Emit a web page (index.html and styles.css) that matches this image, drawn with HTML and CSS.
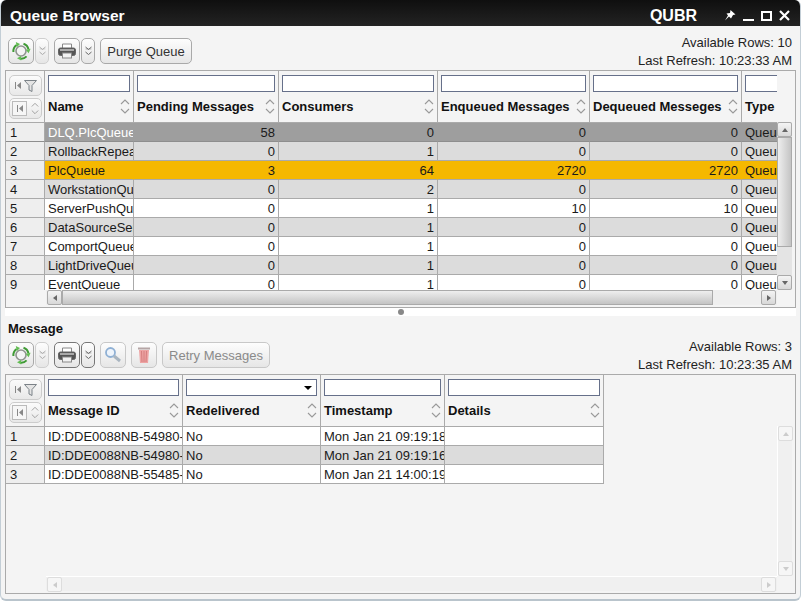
FILE: index.html
```html
<!DOCTYPE html>
<html lang="en">
<head>
    <meta charset="UTF-8">
    <title>Queue Browser</title>
    <link rel="stylesheet" href="styles.css">
</head>
<body>

    <!-- Shared icons -->
    <svg class="sprite" width="0" height="0">
        <symbol id="i-refresh" viewBox="0 0 20 20">
            <circle cx="10" cy="10" r="5" fill="#f4f4f4" stroke="#8f948f" stroke-width="1.600"/>
            <path d="M2.400 11a7.600 7.600 0 0 1 3.200-7" fill="none" stroke="#3f9a35" stroke-width="2"/>
            <path d="M4.800 1l4.200 2-3.200 3.200z" fill="#62bd52"/>
            <path d="M12.500 2.800a7.600 7.600 0 0 1 5 5.600" fill="none" stroke="#3f9a35" stroke-width="2"/>
            <path d="M19.600 7.800l-2 4.400-2.900-3.400z" fill="#62bd52"/>
            <path d="M15.600 15.400a7.600 7.600 0 0 1-6 2.200" fill="none" stroke="#3f9a35" stroke-width="2"/>
            <path d="M10.200 19.600l-4.200-2.400 4-2.300z" fill="#62bd52"/>
        </symbol>
        <symbol id="i-print" viewBox="0 0 18 16">
            <path d="M4.500 5V1h9v4" fill="#fff" stroke="#888"/>
            <rect x=".5" y="5" width="17" height="7.500" rx="2" fill="#555" stroke="#666"/>
            <rect x="2" y="6" width="14" height="2" fill="#aaa"/>
            <rect x="4.500" y="10" width="9" height="5" fill="#f2f2f2" stroke="#888"/>
        </symbol>
        <symbol id="i-more" viewBox="0 0 7 10">
            <path d="M.5 1l3 2.500 3-2.500M.5 6l3 2.500 3-2.500" fill="none" stroke="currentColor"/>
            <path d="M.5 3h6" fill="none" stroke="currentColor" stroke-opacity=".4"/>
        </symbol>
        <symbol id="i-sort" viewBox="0 0 10 15">
            <path d="M1 5l4-4 4 4M1 10l4 4 4-4" fill="none" stroke="#999" stroke-width="1.100"/>
        </symbol>
        <symbol id="i-first" viewBox="0 0 6 7">
            <path d="M.5 0v7" stroke="#888"/>
            <path d="M6 0v7L2 3.500z" fill="#888"/>
        </symbol>
        <symbol id="i-filter" viewBox="0 0 13 12">
            <path d="M.5 .5h12l-4.500 5v6l-3-1.500V5.500z" fill="#e4e4e4" stroke="#7b8288"/>
        </symbol>
    </svg>

    <div class="window">
        <header class="titlebar">
            <span class="titlebar-name">Queue Browser</span>
            <span class="titlebar-code">QUBR</span>
            <svg class="titlebar-ctrl pin" width="12" height="11" viewBox="0 0 12 11">
                <path d="M6.500 0l5 4.500-2.500.5-2 3.500-2-2-4 4 3-5-1.500-2 3.500-.5z" fill="#fff"/>
            </svg>
            <span class="titlebar-ctrl minimize"></span>
            <span class="titlebar-ctrl maximize"></span>
            <svg class="titlebar-ctrl close" width="11" height="11" viewBox="0 0 11 11">
                <path d="M1 1l9 9M10 1l-9 9" stroke="#fff" stroke-width="2.200"/>
            </svg>
        </header>

        <section class="toolbar toolbar-top">
            <button class="btn btn-icon"><svg width="20" height="20"><use href="#i-refresh"/></svg></button>
            <button class="btn btn-more btn-faded"><svg width="7" height="10"><use href="#i-more"/></svg></button>
            <button class="btn btn-icon btn-gap"><svg width="18" height="16"><use href="#i-print"/></svg></button>
            <button class="btn btn-more"><svg width="7" height="10"><use href="#i-more"/></svg></button>
            <button class="btn btn-text">Purge Queue</button>
            <div class="status">
                <div>Available Rows: 10</div>
                <div>Last Refresh: 10:23:33 AM</div>
            </div>
        </section>

        <section class="grid grid-queues">
            <div class="grid-view">
                <table class="table">
                    <colgroup>
                        <col class="w39"><col class="w89"><col class="w145"><col class="w159"><col class="w152"><col class="w152"><col class="w100">
                    </colgroup>
                    <thead>
                        <tr>
                            <th>
                                <div class="corner">
                                    <span class="corner-btn"><svg width="6" height="7"><use href="#i-first"/></svg><svg width="13" height="12"><use href="#i-filter"/></svg></span>
                                    <span class="corner-btn corner-btn-low"><span class="corner-box"><svg width="6" height="7"><use href="#i-first"/></svg></span><svg width="8" height="15"><use href="#i-sort"/></svg></span>
                                </div>
                            </th>
                            <th><div class="head"><input class="filter"><div class="head-label">Name<svg width="10" height="15"><use href="#i-sort"/></svg></div></div></th>
                            <th><div class="head"><input class="filter"><div class="head-label">Pending Messages<svg width="10" height="15"><use href="#i-sort"/></svg></div></div></th>
                            <th><div class="head"><input class="filter"><div class="head-label">Consumers<svg width="10" height="15"><use href="#i-sort"/></svg></div></div></th>
                            <th><div class="head"><input class="filter"><div class="head-label">Enqueued Messages<svg width="10" height="15"><use href="#i-sort"/></svg></div></div></th>
                            <th><div class="head"><input class="filter"><div class="head-label">Dequeued Messeges<svg width="10" height="15"><use href="#i-sort"/></svg></div></div></th>
                            <th><div class="head"><input class="filter"><div class="head-label">Type</div></div></th>
                        </tr>
                    </thead>
                    <tbody>
                        <tr class="row-dark"><td class="idx">1</td><td class="name">DLQ.PlcQueue</td><td class="num">58</td><td class="num">0</td><td class="num">0</td><td class="num">0</td><td>Queue</td></tr>
                        <tr class="row-alt"><td class="idx">2</td><td>RollbackRepeatQueue</td><td class="num">0</td><td class="num">1</td><td class="num">0</td><td class="num">0</td><td>Queue</td></tr>
                        <tr class="row-sel"><td class="idx">3</td><td>PlcQueue</td><td class="num">3</td><td class="num">64</td><td class="num">2720</td><td class="num">2720</td><td>Queue</td></tr>
                        <tr class="row-alt"><td class="idx">4</td><td>WorkstationQueue</td><td class="num">0</td><td class="num">2</td><td class="num">0</td><td class="num">0</td><td>Queue</td></tr>
                        <tr><td class="idx">5</td><td>ServerPushQueue</td><td class="num">0</td><td class="num">1</td><td class="num">10</td><td class="num">10</td><td>Queue</td></tr>
                        <tr class="row-alt"><td class="idx">6</td><td>DataSourceServiceQueue</td><td class="num">0</td><td class="num">1</td><td class="num">0</td><td class="num">0</td><td>Queue</td></tr>
                        <tr><td class="idx">7</td><td>ComportQueue</td><td class="num">0</td><td class="num">1</td><td class="num">0</td><td class="num">0</td><td>Queue</td></tr>
                        <tr class="row-alt"><td class="idx">8</td><td>LightDriveQueue</td><td class="num">0</td><td class="num">1</td><td class="num">0</td><td class="num">0</td><td>Queue</td></tr>
                        <tr><td class="idx">9</td><td>EventQueue</td><td class="num">0</td><td class="num">1</td><td class="num">0</td><td class="num">0</td><td>Queue</td></tr>
                    </tbody>
                </table>
            </div>
            <div class="vbar">
                <span class="sb-btn"><i class="arrow-up"></i></span>
                <span class="vbar-thumb"></span>
                <span class="sb-btn"><i class="arrow-down"></i></span>
            </div>
            <div class="hbar">
                <span class="sb-btn"><i class="arrow-left"></i></span>
                <span class="hbar-thumb"></span>
                <span class="sb-btn"><i class="arrow-right"></i></span>
            </div>
        </section>

        <div class="splitter"><span class="splitter-dot"></span></div>

        <h3 class="section-title">Message</h3>

        <section class="toolbar">
            <button class="btn btn-icon"><svg width="20" height="20"><use href="#i-refresh"/></svg></button>
            <button class="btn btn-more btn-faded"><svg width="7" height="10"><use href="#i-more"/></svg></button>
            <button class="btn btn-icon btn-gap btn-dark"><svg width="18" height="16"><use href="#i-print"/></svg></button>
            <button class="btn btn-more btn-dark"><svg width="7" height="10"><use href="#i-more"/></svg></button>
            <button class="btn btn-icon btn-off btn-gap">
                <svg width="18" height="18" viewBox="0 0 18 18">
                    <circle cx="6.500" cy="6.500" r="4.500" fill="#eef4fb" stroke="#8fb0d4" stroke-width="1.800"/>
                    <path d="M10 10l6 5" stroke="#a9b5c0" stroke-width="3"/>
                </svg>
            </button>
            <button class="btn btn-icon btn-off btn-gap">
                <svg width="14" height="18" viewBox="0 0 14 18">
                    <path d="M1 2.500h12" stroke="#b5a5a5" stroke-width="2"/>
                    <path d="M2 4h10l-1 13H3z" fill="#eda3a3"/>
                    <path d="M4.500 5l.5 11M7 5v11M9.500 5L9 16" stroke="#d67e7e"/>
                </svg>
            </button>
            <button class="btn btn-text btn-off btn-retry">Retry Messages</button>
            <div class="status">
                <div>Available Rows: 3</div>
                <div>Last Refresh: 10:23:35 AM</div>
            </div>
        </section>

        <section class="grid grid-messages">
            <div class="grid-view">
                <table class="table table-messages">
                    <colgroup>
                        <col class="w39"><col class="w138"><col class="w138"><col class="w124"><col class="w159">
                    </colgroup>
                    <thead>
                        <tr>
                            <th>
                                <div class="corner">
                                    <span class="corner-btn"><svg width="6" height="7"><use href="#i-first"/></svg><svg width="13" height="12"><use href="#i-filter"/></svg></span>
                                    <span class="corner-btn corner-btn-low"><span class="corner-box"><svg width="6" height="7"><use href="#i-first"/></svg></span><svg width="8" height="15"><use href="#i-sort"/></svg></span>
                                </div>
                            </th>
                            <th><div class="head"><input class="filter"><div class="head-label">Message ID<svg width="10" height="15"><use href="#i-sort"/></svg></div></div></th>
                            <th><div class="head"><div class="filter filter-select"><i class="arrow-select"></i></div><div class="head-label">Redelivered<svg width="10" height="15"><use href="#i-sort"/></svg></div></div></th>
                            <th><div class="head"><input class="filter"><div class="head-label">Timestamp<svg width="10" height="15"><use href="#i-sort"/></svg></div></div></th>
                            <th><div class="head"><input class="filter"><div class="head-label">Details<svg width="10" height="15"><use href="#i-sort"/></svg></div></div></th>
                        </tr>
                    </thead>
                    <tbody>
                        <tr><td class="idx">1</td><td>ID:DDE0088NB-54980-</td><td>No</td><td>Mon Jan 21 09:19:18</td><td></td></tr>
                        <tr class="row-alt"><td class="idx">2</td><td>ID:DDE0088NB-54980-</td><td>No</td><td>Mon Jan 21 09:19:16</td><td></td></tr>
                        <tr><td class="idx">3</td><td>ID:DDE0088NB-55485-</td><td>No</td><td>Mon Jan 21 14:00:19</td><td></td></tr>
                    </tbody>
                </table>
            </div>
            <div class="vbar vbar-off">
                <span class="sb-btn"><i class="arrow-up"></i></span>
                <span class="sb-btn"><i class="arrow-down"></i></span>
            </div>
            <div class="hbar hbar-off">
                <span class="sb-btn"><i class="arrow-left"></i></span>
                <span class="sb-btn"><i class="arrow-right"></i></span>
            </div>
        </section>
    </div>

</body>
</html>
```

FILE: styles.css
```css
* {
    box-sizing: border-box;
}

body {
    margin: 0;
    background: #fff;
    font-family: "Liberation Sans", Arial, sans-serif;
    font-size: 13px;
    color: #1a1a1a;
}

.sprite {
    position: absolute;
}

.window {
    width: 801px;
    height: 601px;
    overflow: hidden;
    background: #f4f4f4;
    border-radius: 6px;
    border-left: 1px solid #c3ced6;
    border-right: 1px solid #c3ced6;
    border-bottom: 2px solid #b9c4cc;
    display: flex;
    flex-direction: column;
}

/* Title bar */
.titlebar {
    height: 26px;
    margin: 0 -1px;
    flex: none;
    padding: 0 11px 0 10px;
    background: linear-gradient(#0f0f0f, #232323);
    color: #fff;
    font-weight: bold;
    font-size: 15.5px;
    display: flex;
    align-items: center;
}

.titlebar-name {
    flex: 1;
    padding-top: 5px;
}

.titlebar-code {
    margin-right: 27px;
    font-size: 16px;
    padding-top: 5px;
}

.titlebar-ctrl {
    display: block;
    flex: none;
}

.pin {
    margin-right: 7px;
    margin-top: 4px;
}

.minimize {
    width: 11px;
    height: 2px;
    margin: 14px 7px 0 0;
    background: #fff;
}

.maximize {
    width: 11px;
    height: 10px;
    margin: 5px 7px 0 0;
    border: 2px solid #fff;
}

.close {
    margin-top: 4px;
}

/* Toolbars */
.toolbar {
    height: 36px;
    flex: none;
    padding: 4px 8px 0 7px;
    display: flex;
    align-items: flex-start;
}

.toolbar-top {
    margin-top: 8px;
}

.btn {
    height: 26px;
    padding: 0;
    border: 1px solid #a9a9a9;
    border-radius: 5px;
    background: linear-gradient(#fdfdfd, #e6e6e6);
    font: inherit;
    color: #333;
    display: flex;
    align-items: center;
    justify-content: center;
}

.btn-icon {
    width: 26px;
}

.btn-more {
    width: 14px;
    margin-left: 1px;
    color: #666;
}

.btn-faded {
    border-color: #cfcfcf;
    color: #aaa;
}

.btn-gap {
    margin-left: 5px;
}

.btn-dark {
    border-color: #777;
}

.btn-text {
    width: 92px;
    margin-left: 5px;
}

.btn-off {
    border-color: #c8c8c8;
    color: #8a8a8a;
}

.btn-retry {
    width: 108px;
}

.status {
    margin-left: auto;
    margin-top: -4px;
    line-height: 18px;
    text-align: right;
    color: #222;
}

/* Grids */
.grid {
    flex: none;
    margin: 0 4px;
    border: 1px solid #aaa;
    display: grid;
    grid-template-columns: 771px 15px;
}

.grid-queues {
    height: 238px;
    grid-template-rows: 219px 15px;
}

.grid-messages {
    height: 220px;
    grid-template-rows: 201px 15px;
}

.grid-view {
    overflow: hidden;
}

.table {
    width: 836px;
    table-layout: fixed;
    border-collapse: separate;
    border-spacing: 0;
    font-size: 13px;
}

.table-messages {
    width: 598px;
}

.w39 { width: 39px; }
.w89 { width: 89px; }
.w100 { width: 100px; }
.w124 { width: 124px; }
.w138 { width: 138px; }
.w145 { width: 145px; }
.w152 { width: 152px; }
.w159 { width: 159px; }

.table th {
    height: 52px;
    padding: 0;
    border-right: 1px solid #aaa;
    border-bottom: 1px solid #aaa;
    background: #f4f4f4;
    text-align: left;
    vertical-align: top;
}

.head {
    padding: 4px 3px 0;
}

.filter {
    display: block;
    width: 100%;
    height: 17px;
    padding: 0 2px;
    border: 1px solid #66708a;
    background: #fff;
    border-radius: 0;
}

.filter-select {
    display: flex;
    align-items: center;
    justify-content: flex-end;
    padding-right: 4px;
}

.arrow-select {
    border: 4px solid transparent;
    border-top-color: #000;
    border-bottom-width: 0;
}

.head-label {
    height: 24px;
    margin-top: 2px;
    font-size: 13px;
    font-weight: bold;
    color: #111;
    white-space: nowrap;
    display: flex;
    align-items: center;
    justify-content: space-between;
}

.corner {
    padding: 4px 2px 0 3px;
    display: flex;
    flex-direction: column;
    gap: 2px;
}

.corner-btn {
    height: 21px;
    padding: 0 4px 0 5px;
    border: 1px solid #ccc;
    border-radius: 5px;
    background: linear-gradient(#fbfbfb, #e8e8e8);
    display: flex;
    align-items: center;
    justify-content: space-between;
}

.corner-btn-low {
    padding-left: 2px;
    padding-right: 2px;
}

.corner-box {
    width: 15px;
    height: 15px;
    border: 1px solid #bbb;
    background: #f6f6f6;
    display: flex;
    align-items: center;
    justify-content: center;
}

.table td {
    height: 19px;
    padding: 0 3px;
    border-right: 1px solid #aaa;
    border-bottom: 1px solid #aaa;
    background: #fff;
    overflow: hidden;
    white-space: nowrap;
    line-height: 15px;
}

.table .num {
    text-align: right;
}

.table .row-alt td {
    background: #dcdcdc;
}

.table .row-dark td {
    background: #9e9e9e;
    border-color: #9e9e9e #9e9e9e #8e8e8e;
}

.table .row-dark .name {
    color: #fff;
}

.table .row-sel td {
    background: #f5b800;
    border-right-color: #f5b800;
}

.table td.idx,
.table .row-dark td.idx,
.table .row-sel td.idx {
    padding-left: 4px;
    background: #eee;
    border-right-color: #aaa;
}

/* Scrollbars */
.vbar {
    margin-top: 51px;
    background: #e4e4e4;
    display: flex;
    flex-direction: column;
    justify-content: space-between;
}

.hbar {
    grid-column: 1;
    margin-left: 40px;
    padding-right: 1px;
    background: #efefef;
    display: flex;
    justify-content: space-between;
    align-items: stretch;
}

.sb-btn {
    width: 15px;
    height: 15px;
    flex: none;
    border: 1px solid #aaa;
    border-radius: 2px;
    background: linear-gradient(#f4f4f4, #d8d8d8);
    display: flex;
    align-items: center;
    justify-content: center;
}

.hbar .sb-btn {
    margin-left: 1px;
}

.vbar-thumb {
    flex: none;
    height: 110px;
    margin-bottom: auto;
    border: 1px solid #aaa;
    background: linear-gradient(90deg, #eee, #c4c4c4);
}

.hbar-thumb {
    flex: none;
    width: 651px;
    margin-right: auto;
    border: 1px solid #aaa;
    background: linear-gradient(#eee, #c4c4c4);
}

.arrow-up,
.arrow-down,
.arrow-left,
.arrow-right {
    width: 0;
    height: 0;
    border: 3px solid transparent;
}

.arrow-up {
    border-top-width: 0;
    border-bottom: 4px solid #666;
}

.arrow-down {
    border-bottom-width: 0;
    border-top: 4px solid #666;
}

.arrow-left {
    border-left-width: 0;
    border-right: 4px solid #666;
}

.arrow-right {
    border-right-width: 0;
    border-left: 4px solid #666;
}

.vbar-off,
.hbar-off {
    background: #f0f0f0;
}

.vbar-off {
    border-left: 1px solid #fff;
}

.hbar-off {
    border-top: 1px solid #fff;
}

.vbar-off .sb-btn,
.hbar-off .sb-btn {
    border-color: #ddd;
    background: #f6f6f6;
}

.vbar-off i {
    border-top-color: #ccc;
    border-bottom-color: #ccc;
}

.hbar-off i {
    border-left-color: #ccc;
    border-right-color: #ccc;
}

/* Splitter between the two grids */
.splitter {
    height: 8px;
    flex: none;
    margin: 0 4px;
    background: #fff;
    display: flex;
    align-items: center;
    justify-content: center;
}

.splitter-dot {
    width: 6px;
    height: 6px;
    border-radius: 50%;
    background: #888;
}

.section-title {
    height: 22px;
    flex: none;
    margin: 0;
    padding: 5px 0 0 7px;
    font-size: 13px;
    font-weight: bold;
    color: #111;
}
```
